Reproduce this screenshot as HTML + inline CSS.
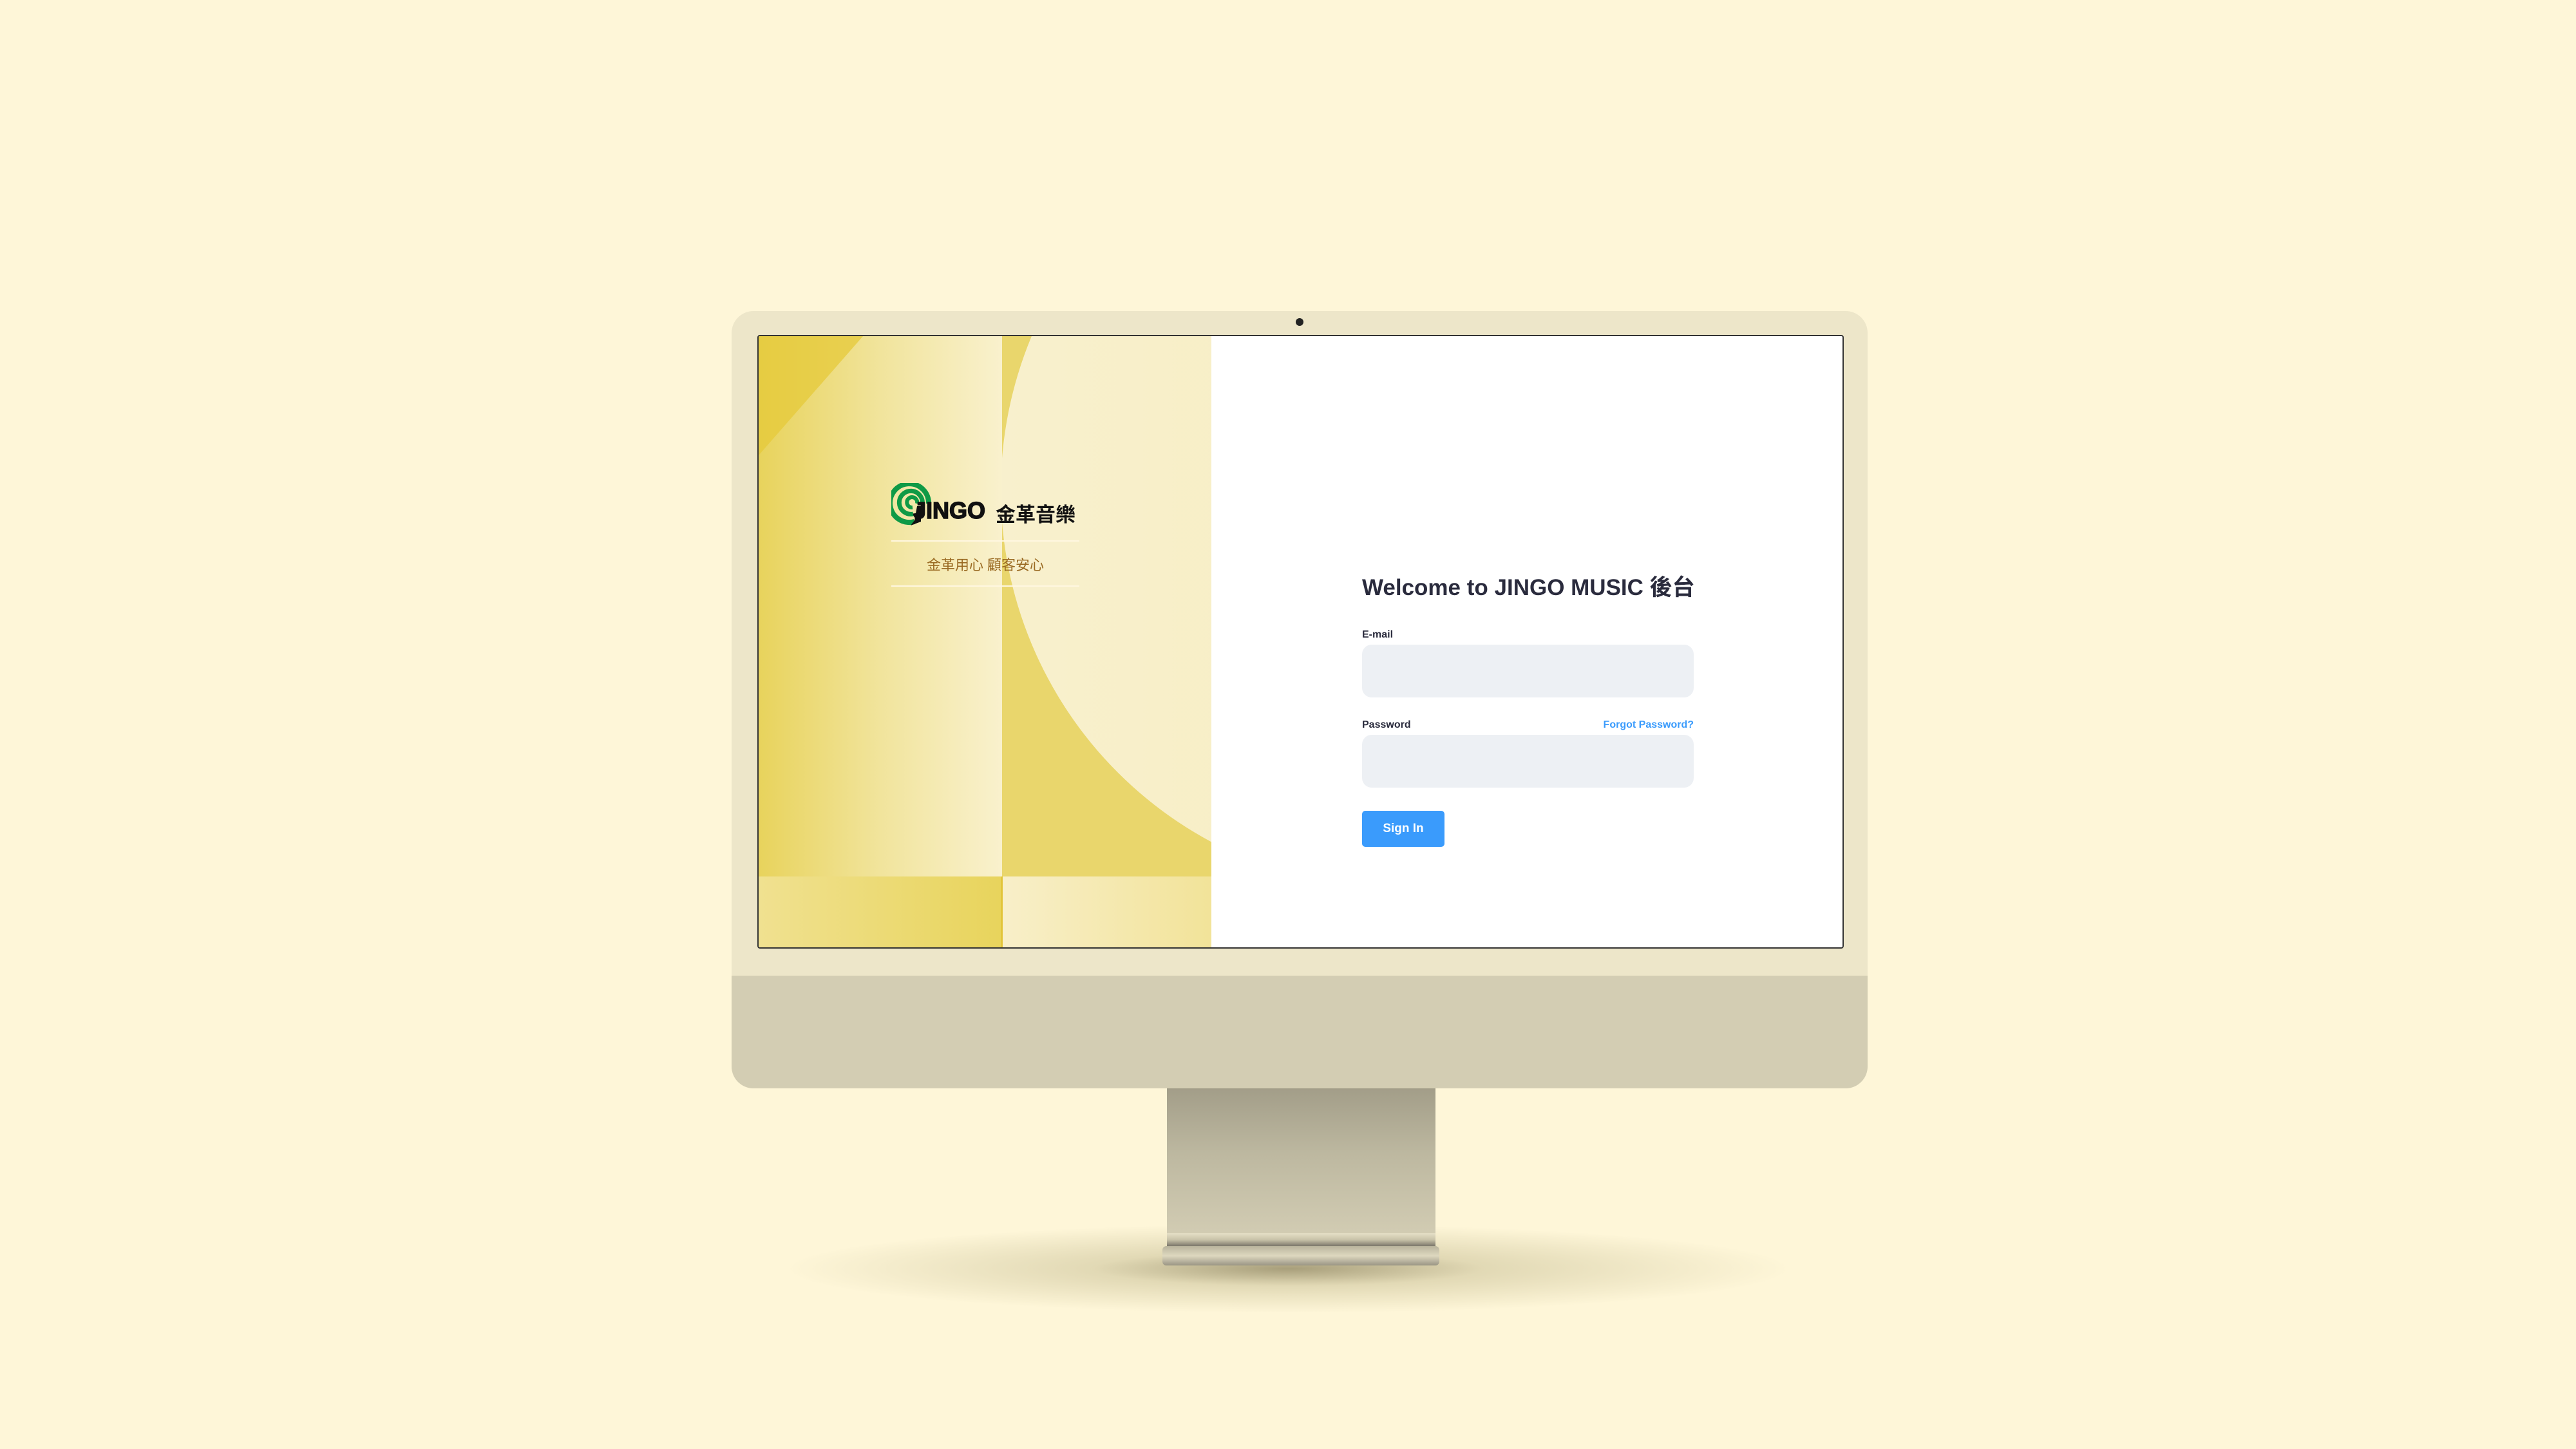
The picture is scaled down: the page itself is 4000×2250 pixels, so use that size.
<!DOCTYPE html>
<html><head><meta charset="utf-8"><style>
*{margin:0;padding:0;box-sizing:border-box}
body{width:4000px;height:2250px;background:#fef6d8;position:relative;overflow:hidden;font-family:"Liberation Sans","Noto Sans CJK TC",sans-serif}
.abs{position:absolute}
</style></head><body>
<div class="abs" style="left:1150px;top:1895px;width:1700px;height:150px;border-radius:50%;background:radial-gradient(ellipse at center,rgba(110,100,60,.6) 0%,rgba(160,150,100,.3) 25%,rgba(254,246,216,0) 65%)"></div>
<div class="abs" style="left:1812px;top:1688px;width:417px;height:230px;background:linear-gradient(#a29d88,#bdb8a0 45%,#d2ccb3)"></div>
<div class="abs" style="left:1812px;top:1915px;width:417px;height:20px;background:linear-gradient(#e5dfc6,#c9c3a9 50%,#7a766a)"></div>
<div class="abs" style="left:1805px;top:1935px;width:430px;height:30px;border-radius:6px;background:linear-gradient(#b9b49d,#ded8bf 50%,#9a9584)"></div>
<div class="abs" style="left:1136px;top:483px;width:1764px;height:1207px;border-radius:34px;background:#ede6c9;overflow:hidden">
  <div class="abs" style="left:0;top:1032px;width:1764px;height:175px;background:#d3cdb3"></div>
</div>
<div class="abs" style="left:2012px;top:494px;width:12px;height:12px;border-radius:50%;background:#222"></div>
<div class="abs" style="left:1176px;top:520px;width:1687px;height:953px;border:2px solid #333;border-radius:4px;overflow:hidden;background:#fff">
  <div class="abs" style="left:0;top:0;width:378px;height:839px;background:linear-gradient(90deg,#e8d35c,#f1e49c 50%,#f9f1cd)"></div>
  <svg class="abs" style="left:0;top:0" width="378" height="839"><polygon points="0,0 162,0 0,185" fill="#e5c93a" opacity=".75"/></svg>
  <div class="abs" style="left:378px;top:0;width:325px;height:839px;background:#e9d66c;overflow:hidden">
    <div class="abs" style="left:-2px;top:-381px;width:1240px;height:1240px;border-radius:50%;background:linear-gradient(90deg,#f8f0cd,#f7eec5 40%,#f1e28f 100%)"></div>
  </div>
  <div class="abs" style="left:0;top:839px;width:378px;height:120px;background:linear-gradient(90deg,#f0e190,#e8d45c)"></div>
  <div class="abs" style="left:376px;top:839px;width:3px;height:120px;background:#e2c53a"></div>
  <div class="abs" style="left:379px;top:839px;width:324px;height:120px;background:linear-gradient(90deg,#f8efc9,#f2e399)"></div>
  <svg class="abs" style="left:206px;top:228px" width="70" height="66" viewBox="0 0 70 66">
    <path d="M36,60 A30,30 0 1 1 58,32" fill="none" stroke="#0f9a46" stroke-width="8"/>
    <path d="M34,48 A18,18 0 1 1 48,34" fill="none" stroke="#0f9a46" stroke-width="7"/>
    <path d="M33,38 A8,8 0 1 1 40,32" fill="none" stroke="#0f9a46" stroke-width="6"/>
    <path d="M40,36 L46,36 L46,60 L30,66 L36,58 Z" fill="#111"/>
  </svg>
  <div class="abs" style="left:240px;top:250px;font:900 36px 'Liberation Sans',sans-serif;color:#111;-webkit-text-stroke:1.5px #111">JINGO</div>
  <div class="abs" style="left:368px;top:252px;font:600 31px 'Liberation Sans','Noto Sans CJK TC',sans-serif;color:#111">金革音樂</div>
  <div class="abs" style="left:206px;top:317px;width:292px;height:2px;background:#fff7e0"></div>
  <div class="abs" style="left:206px;top:338px;width:292px;text-align:center;font:22px 'Liberation Sans','Noto Sans CJK TC',sans-serif;color:#9a6a22">金革用心 顧客安心</div>
  <div class="abs" style="left:206px;top:387px;width:292px;height:2px;background:#fff7e0"></div>
  <div class="abs" style="left:937px;top:362px;font:600 35px 'Liberation Sans','Noto Sans CJK TC',sans-serif;color:#2a2b3d;white-space:nowrap">Welcome to JINGO MUSIC 後台</div>
  <div class="abs" style="left:937px;top:455px;font:600 16px 'Liberation Sans',sans-serif;color:#2a2b3d">E-mail</div>
  <div class="abs" style="left:937px;top:479px;width:515px;height:82px;border-radius:15px;background:#edf0f4"></div>
  <div class="abs" style="left:937px;top:595px;font:600 16px 'Liberation Sans',sans-serif;color:#2a2b3d">Password</div>
  <div class="abs" style="left:1257px;top:595px;width:195px;text-align:right;font:600 16px 'Liberation Sans',sans-serif;color:#3a9bfc">Forgot Password?</div>
  <div class="abs" style="left:937px;top:619px;width:515px;height:82px;border-radius:15px;background:#edf0f4"></div>
  <div class="abs" style="left:937px;top:737px;width:128px;height:56px;border-radius:5px;background:#3a9bfc;color:#fff;font:600 19px 'Liberation Sans',sans-serif;text-align:center;line-height:56px">Sign In</div>
</div>
</body></html>
